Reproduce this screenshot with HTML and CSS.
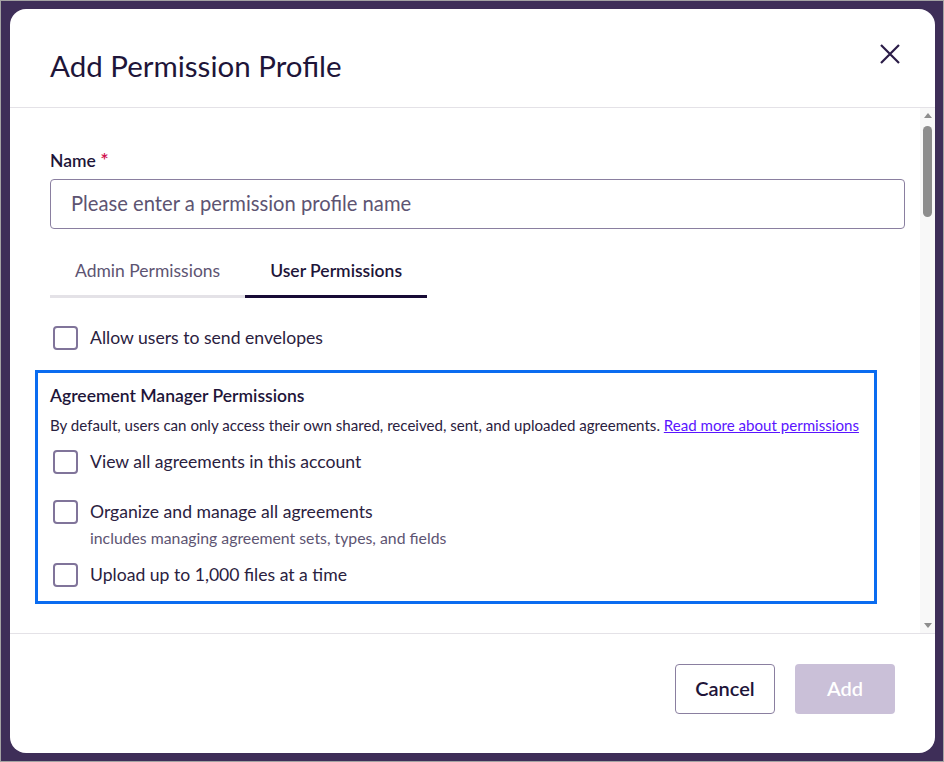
FILE: index.html
```html
<!DOCTYPE html>
<html lang="en">
<head>
    <meta charset="UTF-8">
    <meta name="viewport" content="width=device-width, initial-scale=1.0">
    <title>Add Permission Profile</title>
    <link rel="stylesheet" href="styles.css">
</head>
<body>

    <div class="backdrop">
        <div class="modal">

            <!-- Header -->
            <div class="modal-header">
                <h2 class="modal-title">Add Permission Profile</h2>
                <button class="close-btn" aria-label="Close">
                    <svg width="20" height="20" viewBox="0 0 20 20">
                        <path d="M1 1 L19 19 M19 1 L1 19" stroke="#2a1c47" stroke-width="2.2" fill="none"/>
                    </svg>
                </button>
            </div>

            <!-- Body -->
            <div class="modal-body">
                <div class="body-content">
                    <label class="field-label" for="profile-name">Name <span class="required">*</span></label>
                    <input type="text" id="profile-name" class="text-input" placeholder="Please enter a permission profile name">

                    <div class="tabs">
                        <div class="tab">Admin Permissions</div>
                        <div class="tab active">User Permissions</div>
                    </div>

                    <label class="check-row first">
                        <span class="checkbox"></span>
                        <span class="check-text">Allow users to send envelopes</span>
                    </label>

                    <div class="section highlight">
                        <div class="section-title">Agreement Manager Permissions</div>
                        <p class="section-desc">By default, users can only access their own shared, received, sent, and uploaded agreements. <a href="#">Read more about permissions</a></p>

                        <label class="check-row">
                            <span class="checkbox"></span>
                            <span class="check-text">View all agreements in this account</span>
                        </label>

                        <label class="check-row spaced">
                            <span class="checkbox"></span>
                            <span class="check-text">
                                Organize and manage all agreements
                                <span class="check-hint">includes managing agreement sets, types, and fields</span>
                            </span>
                        </label>

                        <label class="check-row tight">
                            <span class="checkbox"></span>
                            <span class="check-text">Upload up to 1,000 files at a time</span>
                        </label>
                    </div>
                </div>

                <!-- scrollbar -->
                <div class="scrollbar">
                    <span class="arrow-up"></span>
                    <div class="scroll-track">
                        <div class="scroll-thumb"></div>
                    </div>
                    <span class="arrow-down"></span>
                </div>
            </div>

            <!-- Footer -->
            <div class="modal-footer">
                <button class="btn btn-secondary">Cancel</button>
                <button class="btn btn-primary" disabled>Add</button>
            </div>

        </div>
    </div>

</body>
</html>
```

FILE: styles.css
```css
* {
    box-sizing: border-box;
}

body {
    margin: 0;
    font-family: Lato, "Noto Sans", sans-serif;
    color: #1e1539;
}

.backdrop {
    width: 944px;
    height: 762px;
    border: 1px solid #a3a3a3;
    background-color: #3e2e58;
    padding: 8px 0 0 9px;
}

.modal {
    width: 925px;
    height: 744px;
    background-color: white;
    border-radius: 16px;
    display: flex;
    flex-direction: column;
    overflow: hidden;
}

/* Header */
.modal-header {
    height: 99px;
    flex-shrink: 0;
    display: flex;
    justify-content: space-between;
    align-items: flex-start;
    padding: 26px 33px 0 40px;
    border-bottom: 1px solid #e4e2e7;
}

.modal-title {
    margin: 13px 0 0 0;
    font-size: 29.5px;
    line-height: 36px;
    font-weight: 400;
    color: #1e1539;
}

.close-btn {
    width: 24px;
    height: 24px;
    margin-top: 7px;
    padding: 2px;
    border: none;
    background: none;
    cursor: pointer;
}

.close-btn svg {
    display: block;
}

/* Body */
.modal-body {
    flex: 1;
    display: flex;
    min-height: 0;
}

.body-content {
    flex: 1;
    padding: 39px 15px 0 40px;
}

.field-label {
    display: block;
    font-size: 17.5px;
    line-height: 24px;
    font-weight: 600;
    margin-bottom: 6px;
}

.required {
    color: #d1114f;
    font-size: 20px;
}

.text-input {
    display: block;
    width: 100%;
    height: 50px;
    border: 1px solid #8a7fa0;
    border-radius: 4px;
    padding: 0 20px 3px 20px;
    font-family: inherit;
    font-size: 20.2px;
    color: #1e1539;
}

.text-input::placeholder {
    color: #5d5472;
}

.tabs {
    display: inline-flex;
    margin-top: 15px;
}

.tab {
    padding: 15px 25px 12px 25px;
    font-size: 17.5px;
    line-height: 24px;
    color: #5d5472;
    border-bottom: 3px solid #e4e2e7;
    cursor: pointer;
}

.tab.active {
    font-weight: 600;
    color: #1e1539;
    border-bottom-color: #170b35;
}

.check-row {
    display: flex;
    align-items: flex-start;
    gap: 12px;
    cursor: pointer;
}

.check-row.first {
    margin-top: 28px;
    padding-left: 3px;
}

.checkbox {
    width: 25px;
    height: 24px;
    flex-shrink: 0;
    border: 2px solid #80749a;
    border-radius: 4px;
    background: white;
}

.check-text {
    font-size: 17.6px;
    line-height: 24px;
    color: #2a2140;
}

.check-hint {
    display: block;
    margin-top: 4px;
    font-size: 15.8px;
    line-height: 20px;
    color: #5d5472;
}

/* Agreement manager section */
.section {
    margin-top: 20px;
}

.section.highlight {
    margin-left: -15px;
    width: 842px;
    border: 3px solid #0a6cf0;
    padding: 12px 12px 14px 12px;
}

.section.highlight .check-row {
    padding-left: 3px;
}

.section-title {
    font-size: 17.5px;
    line-height: 22px;
    font-weight: 600;
    color: #1e1539;
}

.section-desc {
    margin: 8px 0 0 0;
    font-size: 15.1px;
    line-height: 20px;
    color: #2a2140;
}

.section-desc a {
    color: #5a14ff;
}

.section-desc + .check-row {
    margin-top: 15px;
}

.check-row.spaced {
    margin-top: 26px;
}

.check-row.tight {
    margin-top: 15px;
}

/* Fake scrollbar */
.scrollbar {
    width: 15px;
    flex-shrink: 0;
    background-color: #f8f8f8;
    display: flex;
    flex-direction: column;
    align-items: center;
    padding: 5px 0;
}

.arrow-up,
.arrow-down {
    width: 0;
    height: 0;
    border-left: 4px solid transparent;
    border-right: 4px solid transparent;
}

.arrow-up {
    border-bottom: 5px solid #8d8d8d;
}

.arrow-down {
    border-top: 5px solid #8d8d8d;
}

.scroll-track {
    flex: 1;
    width: 100%;
    padding-top: 8px;
    display: flex;
    justify-content: center;
}

.scroll-thumb {
    width: 9px;
    height: 91px;
    border-radius: 5px;
    background-color: #8d8d8d;
}

/* Footer */
.modal-footer {
    height: 120px;
    flex-shrink: 0;
    border-top: 1px solid #e4e2e7;
    display: flex;
    justify-content: flex-end;
    align-items: flex-start;
    gap: 20px;
    padding: 30px 40px 0 0;
}

.btn {
    width: 100px;
    height: 50px;
    border-radius: 4px;
    padding: 0 0 3px 0;
    font-family: inherit;
    font-size: 20px;
    font-weight: 600;
    cursor: pointer;
}

.btn-secondary {
    background: white;
    border: 1px solid #8a7fa0;
    color: #1e1539;
}

.btn-primary {
    border: none;
    background-color: #cac0d8;
    color: white;
}
```
